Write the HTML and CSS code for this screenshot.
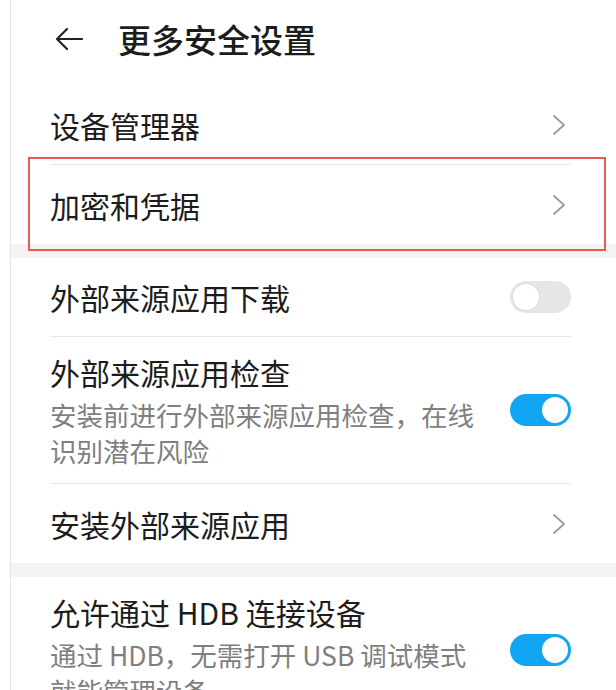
FILE: index.html
```html
<!DOCTYPE html>
<html lang="zh-CN">
<head>
<meta charset="utf-8">
<title>更多安全设置</title>
<link rel="stylesheet" href="styles.css">
</head>
<body>
<div class="page">
  <header class="header">
    <svg class="back" width="28" height="24" viewBox="0 0 28 24"><path d="M27 12H2M12 2L2 12l10 10" fill="none" stroke="#222" stroke-width="2.2" stroke-linecap="round" stroke-linejoin="round"/></svg>
    <h1 class="title">更多安全设置</h1>
  </header>

  <section class="group">
    <div class="row">
      <div class="label">设备管理器</div>
      <svg class="chev" width="14" height="22" viewBox="0 0 14 22"><path d="M2 2l10 9-10 9" fill="none" stroke="#9a9a9a" stroke-width="1.8" stroke-linecap="round" stroke-linejoin="round"/></svg>
    </div>
    <div class="row highlight">
      <div class="label">加密和凭据</div>
      <svg class="chev" width="14" height="22" viewBox="0 0 14 22"><path d="M2 2l10 9-10 9" fill="none" stroke="#9a9a9a" stroke-width="1.8" stroke-linecap="round" stroke-linejoin="round"/></svg>
    </div>
  </section>

  <div class="band"></div>

  <section class="group">
    <div class="row">
      <div class="label">外部来源应用下载</div>
      <span class="switch off"><span class="knob"></span></span>
    </div>
    <div class="row tall">
      <div class="text">
        <div class="label">外部来源应用检查</div>
        <div class="sub">安装前进行外部来源应用检查，在线识别潜在风险</div>
      </div>
      <span class="switch on"><span class="knob"></span></span>
    </div>
    <div class="row">
      <div class="label">安装外部来源应用</div>
      <svg class="chev" width="14" height="22" viewBox="0 0 14 22"><path d="M2 2l10 9-10 9" fill="none" stroke="#9a9a9a" stroke-width="1.8" stroke-linecap="round" stroke-linejoin="round"/></svg>
    </div>
  </section>

  <div class="band"></div>

  <section class="group">
    <div class="row tall">
      <div class="text">
        <div class="label">允许通过 HDB 连接设备</div>
        <div class="sub">通过 HDB，无需打开 USB 调试模式就能管理设备</div>
      </div>
      <span class="switch on"><span class="knob"></span></span>
    </div>
  </section>
</div>
</body>
</html>
```

FILE: styles.css
```css
* { box-sizing: border-box; }
html, body {
  margin: 0;
  padding: 0;
  background: #fff;
  overflow: hidden;
}
body {
  font-family: "Noto Sans CJK SC", "Noto Sans", sans-serif;
  color: #1c1c1c;
  width: 616px;
  height: 690px;
}
.page {
  margin-left: 10px;
  border-left: 1px solid #e6e6e6;
  min-height: 690px;
}
.header {
  height: 86px;
  display: flex;
  align-items: center;
  padding-left: 44px;
  padding-bottom: 8px;
}
.back { display: block; flex: none; }
.title {
  margin: 0 0 0 35px;
  font-size: 33px;
  font-weight: 500;
  line-height: 44px;
  color: #1c1c1c;
}
.group {
  padding: 0 45px 0 39px;
  position: relative;
}
.row {
  min-height: 79px;
  display: flex;
  align-items: center;
  justify-content: space-between;
  border-bottom: 1px solid #e8e8e8;
}
.row:last-child { border-bottom: none; }
.row.tall {
  padding: 13px 0 14px;
}
.label {
  font-size: 30px;
  line-height: 44px;
}
.text { width: 440px; }
.sub {
  margin-top: 3px;
  font-size: 26.5px;
  line-height: 36px;
  color: #7f7f7f;
}
.chev { display: block; margin-right: 5px; }
.highlight { position: relative; }
.highlight::after {
  content: "";
  position: absolute;
  left: -22px;
  right: -35px;
  top: -8px;
  bottom: -7px;
  border: 2px solid #ea5a52;
  pointer-events: none;
}
.band {
  height: 14px;
  background: #f4f4f4;
}
.switch {
  flex: none;
  width: 61px;
  height: 32px;
  border-radius: 16px;
  position: relative;
  display: block;
}
.switch.off { background: #e6e6e6; }
.switch.on { background: #12a5f4; }
.knob {
  position: absolute;
  top: 3px;
  width: 26px;
  height: 26px;
  border-radius: 50%;
  background: #fff;
}
.switch.off .knob { left: 3px; box-shadow: 0 0 0 1px #dcdcdc; }
.switch.on .knob { right: 3px; }
```
